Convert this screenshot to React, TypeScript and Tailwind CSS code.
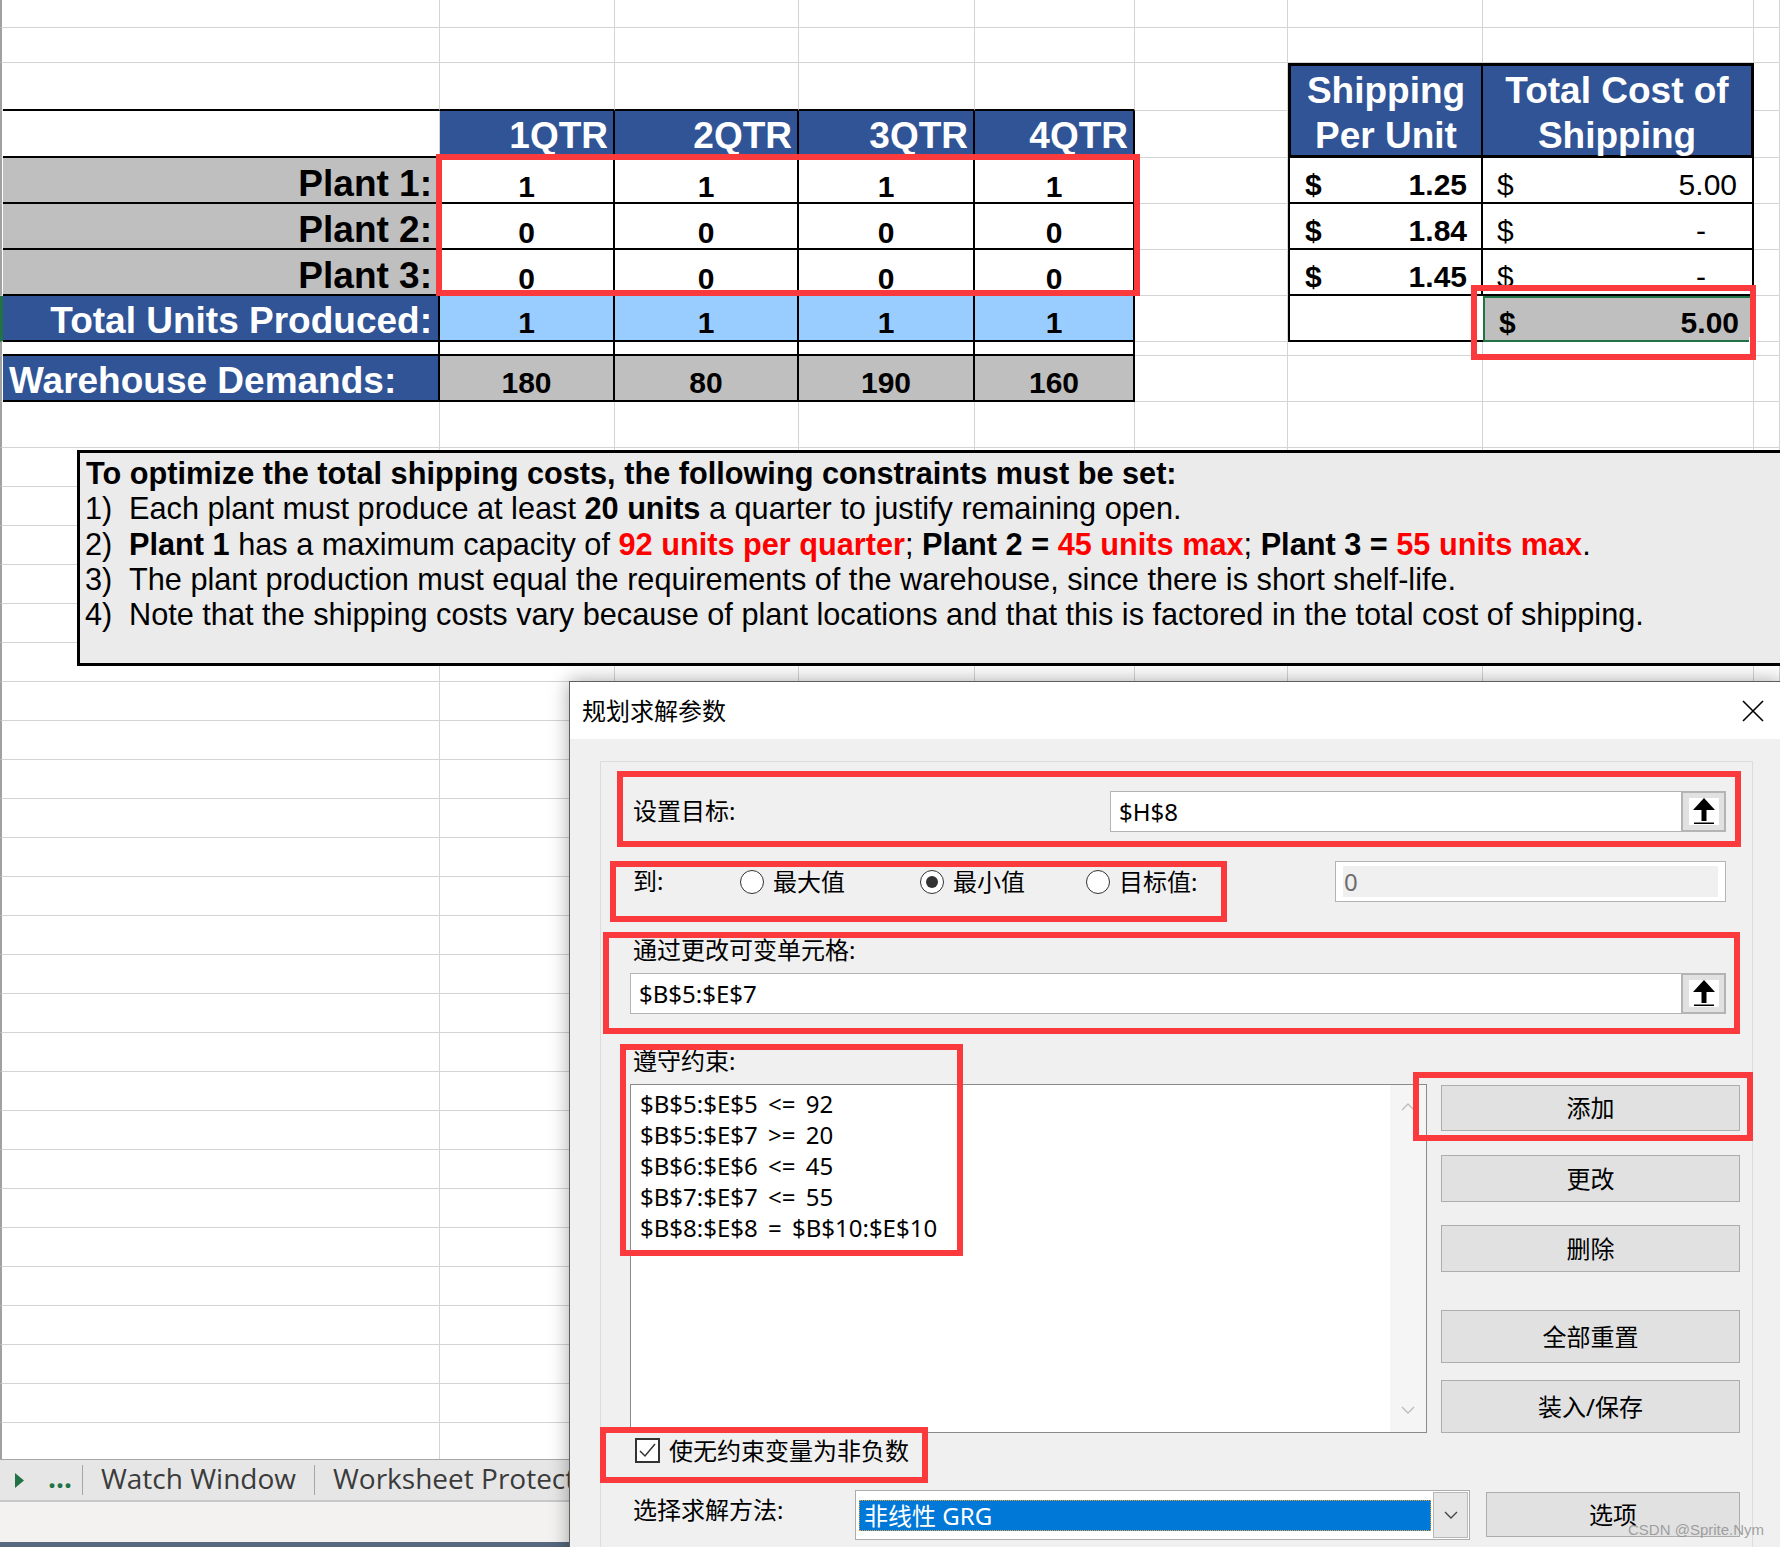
import React from 'react'

type Cell = { cls: string; body?: React.ReactNode }

const GRID = 'border-r border-b border-[#d4d4d4] bg-white'
const LEFT = 'border-l-2 border-l-[#a0a0a0] border-b border-b-[#d4d4d4] bg-white'
const LEFT_SEL = 'border-l-[3px] border-l-[#217346] border-b border-b-[#d4d4d4] bg-white'

const qtrs = ['1QTR', '2QTR', '3QTR', '4QTR']
const plants = [
  ['Plant 1:', [1, 1, 1, 1]],
  ['Plant 2:', [0, 0, 0, 0]],
  ['Plant 3:', [0, 0, 0, 0]],
] as const
const perUnit = ['1.25', '1.84', '1.45']
const totals = ['5.00', '-', '-']
const demands = [180, 80, 190, 160]

const special: Record<string, Cell> = {}

// row 3: top edge of the quarter table + shipping header
for (let c = 1; c <= 5; c++) {
  special[`3-${c}`] = { cls: 'border-r border-r-[#d4d4d4] border-b-2 border-b-black bg-white' }
}
special['3-7'] = {
  cls: 'row-span-2 bg-[#305496] border-t-[3px] border-l-[3px] border-b-[3px] border-r-2 border-black pt-[2px] text-center text-white font-bold text-[37px] leading-[45px]',
  body: <><div>Shipping</div><div>Per Unit</div></>,
}
special['3-8'] = {
  cls: 'row-span-2 bg-[#305496] border-t-[3px] border-r-[3px] border-b-[3px] border-black pt-[2px] text-center text-white font-bold text-[37px] leading-[45px]',
  body: <><div>Total Cost of</div><div>Shipping</div></>,
}

// row 4: quarter headers
special['4-1'] = { cls: 'border-r border-r-[#d4d4d4] border-b-2 border-b-black bg-white' }
qtrs.forEach((q, i) => {
  special[`4-${i + 2}`] = {
    cls: 'bg-[#305496] border-r-2 border-b-2 border-black flex items-end justify-end pr-[5px] pb-[2px] text-white font-bold text-[37px] leading-none',
    body: q,
  }
})

// rows 5-7: plants
plants.forEach(([label, vals], i) => {
  const r = 5 + i
  special[`${r}-1`] = {
    cls: 'bg-[#bfbfbf] border-r-2 border-b-2 border-black flex items-end justify-end pr-[6px] font-bold text-[37px] leading-none',
    body: label,
  }
  vals.forEach((v, j) => {
    special[`${r}-${j + 2}`] = {
      cls: 'bg-white border-r-2 border-b-2 border-black flex items-end justify-center font-bold text-[30px] leading-none',
      body: v,
    }
  })
  special[`${r}-7`] = {
    cls: 'bg-white border-l-2 border-r-2 border-b-2 border-black flex items-end justify-between pl-[15px] pr-[14px] pb-[2px] font-bold text-[30px] leading-none',
    body: <><span>$</span><span>{perUnit[i]}</span></>,
  }
  special[`${r}-8`] = {
    cls: 'bg-white border-r-2 border-b-2 border-black flex items-end justify-between pl-[14px] pr-[15px] pb-[2px] text-[30px] leading-none',
    body: <><span>$</span><span className={totals[i] === '-' ? 'mr-[31px]' : ''}>{totals[i]}</span></>,
  }
})

// row 8: totals
special['8-1'] = {
  cls: 'bg-[#305496] border-r-2 border-b-2 border-black flex items-end justify-end pr-[6px] pb-[1px] text-white font-bold text-[37px] leading-none',
  body: 'Total Units Produced:',
}
for (let c = 2; c <= 5; c++) {
  special[`8-${c}`] = {
    cls: 'bg-[#99ccff] border-r-2 border-b-2 border-black flex items-end justify-center pb-[2px] font-bold text-[30px] leading-none',
    body: 1,
  }
}
special['8-7'] = { cls: 'bg-white border-l-2 border-b-2 border-black' }
special['8-8'] = {
  cls: 'relative bg-[#bfbfbf] border-2 border-[#217346] flex items-end justify-between pl-[14px] pr-[13px] pb-[2px] font-bold text-[30px] leading-none',
  body: (
    <>
      <span>$</span>
      <span>5.00</span>
      <div className="absolute -right-[5px] -bottom-[5px] w-[8px] h-[8px] bg-[#217346] border border-white" />
    </>
  ),
}

// row 9: spacer row
for (let c = 1; c <= 5; c++) {
  special[`9-${c}`] = { cls: 'bg-white border-r-2 border-b-2 border-black' }
}

// row 10: demands
special['10-1'] = {
  cls: 'bg-[#305496] border-r-2 border-b-2 border-black flex items-end pl-[6px] pb-[1px] text-white font-bold text-[37px] leading-none',
  body: 'Warehouse Demands:',
}
demands.forEach((d, i) => {
  special[`10-${i + 2}`] = {
    cls: 'bg-[#bfbfbf] border-r-2 border-b-2 border-black flex items-end justify-center pb-[2px] font-bold text-[30px] leading-none',
    body: d,
  }
})

const Sheet = () => {
  const cells: React.ReactNode[] = []
  for (let r = 1; r <= 37; r++) {
    for (let c = 0; c <= 9; c++) {
      if (r === 4 && (c === 7 || c === 8)) continue
      const key = `${r}-${c}`
      const s = special[key]
      const cls = s ? s.cls : c === 0 ? (r === 8 ? LEFT_SEL : LEFT) : GRID
      cells.push(<div key={key} className={cls}>{s?.body}</div>)
    }
  }
  return (
    <div className="h-[1459px] overflow-hidden">
      <div className="grid grid-cols-[3px_437px_175px_184px_176px_160px_153px_195px_271px_1fr] grid-rows-[28px_35px_48px_47px_46px_46px_46px_46px_14px_46px_46px_repeat(26,39px)]">
        {cells}
      </div>
    </div>
  )
}

const Red = ({ cls }: { cls: string }) => (
  <div className={`absolute border-[6px] border-[#fa3a3c] pointer-events-none ${cls}`} />
)

const UpArrow = () => (
  <div className="w-[30px] h-[27px] bg-white">
    <svg width="30" height="27" viewBox="0 0 30 27">
      <polygon points="15,0 4,12 26,12" fill="#000" />
      <rect x="12.5" y="10" width="5" height="13" fill="#000" />
      <rect x="5" y="24.5" width="20" height="1.5" fill="#000" />
    </svg>
  </div>
)

const RefInput = ({ value, cls }: { value: string; cls: string }) => (
  <div className={`flex h-[41px] border border-[#b4b4b4] bg-white ${cls}`}>
    <div className="flex-1 flex items-center pl-[8px]">{value}</div>
    <div className="w-[45px] -my-px -mr-px border-2 border-[#b4b4b4] bg-[#e1e1e1] flex items-center justify-center">
      <UpArrow />
    </div>
  </div>
)

const Radio = ({ label, checked, cls }: { label: string; checked?: boolean; cls?: string }) => (
  <div className={`flex items-center gap-[9px] ${cls ?? ''}`}>
    <div className="w-[24px] h-[24px] rounded-full border-[1.5px] border-[#333] bg-white flex items-center justify-center">
      {checked && <div className="w-[12px] h-[12px] rounded-full bg-[#333]" />}
    </div>
    <span>{label}</span>
  </div>
)

const Btn = ({ label, cls }: { label: string; cls: string }) => (
  <div className={`flex items-center justify-center bg-[#e1e1e1] border border-[#adadad] ${cls}`}>{label}</div>
)

const Chevron = ({ up, color }: { up?: boolean; color: string }) => (
  <svg width="14" height="8" viewBox="0 0 14 8">
    <path d={up ? 'M1 7L7 1L13 7' : 'M1 1L7 7L13 1'} stroke={color} strokeWidth="1.4" fill="none" />
  </svg>
)

const constraints = [
  '$B$5:$E$5 <= 92',
  '$B$5:$E$7 >= 20',
  '$B$6:$E$6 <= 45',
  '$B$7:$E$7 <= 55',
  '$B$8:$E$8 = $B$10:$E$10',
]

const SolverDialog = () => (
  <div className="absolute left-[569px] top-[681px] w-[1213px] h-[900px] border border-[#5f5f5f] bg-[#f0f0f0] shadow-[0_0_18px_rgba(0,0,0,0.35)] font-['Noto_Sans','Noto_Sans_CJK_SC',sans-serif] text-[24px] text-black">
    {/* title bar */}
    <div className="h-[57px] bg-white flex items-center justify-between pl-[12px] pr-[17px]">
      <span>规划求解参数</span>
      <svg width="22" height="22" viewBox="0 0 22 22">
        <path d="M1 1L21 21M21 1L1 21" stroke="#000" strokeWidth="1.6" />
      </svg>
    </div>

    <div className="pt-[22px] pl-[30px] pr-[28px]">
      <div className="h-[900px] border border-[#dcdcdc] pl-[29px] pr-[26px] flex flex-col">
        {/* objective */}
        <div className="mt-[29px] h-[41px] flex items-center justify-between">
          <span className="pl-[3px] -mt-[2px]">设置目标:</span>
          <RefInput value="$H$8" cls="w-[616px]" />
        </div>

        {/* to */}
        <div className="mt-[29px] h-[41px] flex items-center">
          <span className="pl-[3px] w-[110px] -mt-[2px]">到:</span>
          <Radio label="最大值" cls="w-[180px]" />
          <Radio label="最小值" checked cls="w-[166px]" />
          <Radio label="目标值:" />
          <div className="ml-auto w-[391px] h-full border border-[#b4b4b4] bg-white px-[7px] py-[4px]">
            <div className="h-full bg-[#f0f0f0] flex items-center pl-[1px] text-[#6d6d6d]">0</div>
          </div>
        </div>

        {/* changing cells */}
        <div className="mt-[32px] h-[32px] leading-[32px] pl-[3px]">通过更改可变单元格:</div>
        <RefInput value="$B$5:$E$7" cls="mt-[7px] w-full" />

        {/* constraints */}
        <div className="mt-[31px] h-[32px] leading-[32px] pl-[3px]">遵守约束:</div>
        <div className="mt-[7px] flex">
          <div className="shrink-0 w-[797px] h-[349px] border border-[#8a8a8a] bg-white flex">
            <div className="flex-1 pl-[9px] pt-[3px] leading-[31px] [word-spacing:4px]">
              {constraints.map((c) => (
                <div key={c}>{c}</div>
              ))}
            </div>
            <div className="w-[36px] bg-[#f5f5f5] flex flex-col items-center justify-between py-[18px]">
              <Chevron up color="#bdbdbd" />
              <Chevron color="#bdbdbd" />
            </div>
          </div>
          <div className="shrink-0 ml-[14px] w-[299px] flex flex-col pt-[1px]">
            <Btn label="添加" cls="h-[46px]" />
            <Btn label="更改" cls="mt-[24px] h-[47px]" />
            <Btn label="删除" cls="mt-[23px] h-[47px]" />
            <Btn label="全部重置" cls="mt-[38px] h-[53px]" />
            <Btn label="装入/保存" cls="mt-[17px] h-[53px]" />
          </div>
        </div>

        {/* non-negative */}
        <div className="mt-[5px] h-[25px] flex items-center gap-[9px] pl-[5px]">
          <div className="w-[25px] h-[25px] border-2 border-[#333] bg-white">
            <svg width="21" height="21" viewBox="0 0 21 21">
              <path d="M3 11L8 16L18 4" stroke="#333" strokeWidth="1.5" fill="none" />
            </svg>
          </div>
          <span>使无约束变量为非负数</span>
        </div>

        {/* method */}
        <div className="mt-[27px] flex items-start">
          <span className="shrink-0 w-[225px] pl-[3px] h-[50px] flex items-center pb-[10px]">选择求解方法:</span>
          <div className="shrink-0 w-[615px] h-[50px] border border-[#acacac] bg-white flex">
            <div className="flex-1 pl-[3px] pr-[2px] pt-[9px] pb-[8px]">
              <div className="h-full bg-[#0078d7] border border-dotted border-[#e8a23a] flex items-center pl-[4px] text-white">
                非线性 GRG
              </div>
            </div>
            <div className="w-[35px] my-[1px] mr-[1px] bg-[#e6e6e6] border border-[#b8b8b8] flex items-center justify-center">
              <Chevron color="#444" />
            </div>
          </div>
          <Btn label="选项" cls="shrink-0 ml-[16px] mt-[2px] w-[254px] h-[45px]" />
        </div>
      </div>
    </div>
  </div>
)

const NoteBox = () => (
  <div className="absolute left-[77px] top-[450px] w-[1740px] h-[216px] border-[3px] border-black bg-[#ebebeb] pl-[5px] pt-[3px] text-[30.7px] leading-[35.3px] text-black">
    <div className="font-bold pl-[1px]">To optimize the total shipping costs, the following constraints must be set:</div>
    <div className="flex">
      <span className="w-[44px] shrink-0">1)</span>
      <span>Each plant must produce at least <b>20 units</b> a quarter to justify remaining open.</span>
    </div>
    <div className="flex">
      <span className="w-[44px] shrink-0">2)</span>
      <span>
        <b>Plant 1</b> has a maximum capacity of <b className="text-[#ff0000]">92 units per quarter</b>; <b>Plant 2 =</b>{' '}
        <b className="text-[#ff0000]">45 units max</b>; <b>Plant 3 =</b> <b className="text-[#ff0000]">55 units max</b>.
      </span>
    </div>
    <div className="flex">
      <span className="w-[44px] shrink-0">3)</span>
      <span>The plant production must equal the requirements of the warehouse, since there is short shelf-life.</span>
    </div>
    <div className="flex">
      <span className="w-[44px] shrink-0">4)</span>
      <span>Note that the shipping costs vary because of plant locations and that this is factored in the total cost of shipping.</span>
    </div>
  </div>
)

const TabBar = () => (
  <div className="h-[41px] bg-[#e6e6e6] border-t border-[#a6a6a6] flex items-center font-['Open_Sans',sans-serif] text-[28px] text-[#3b3b3b]">
    <svg className="ml-[15px]" width="9" height="15" viewBox="0 0 9 15">
      <polygon points="0,0 9,7.5 0,15" fill="#217346" />
    </svg>
    <span className="ml-[24px] -mt-[6px] font-bold text-[#217346] leading-none">...</span>
    <div className="ml-[10px] w-px h-[30px] bg-[#a6a6a6]" />
    <span className="ml-[18px] -mt-[5px] leading-none">Watch Window</span>
    <div className="ml-[18px] w-px h-[30px] bg-[#a6a6a6]" />
    <span className="ml-[18px] -mt-[5px] leading-none whitespace-nowrap">Worksheet Protection</span>
  </div>
)

export default function App() {
  return (
    <div className="relative w-[1780px] h-[1547px] overflow-hidden bg-white font-['Liberation_Sans',Arial,sans-serif] text-black">
      <Sheet />
      <TabBar />
      <div className="h-[42px] bg-[#f3f2f1] border-t-2 border-[#c8c8c8]" />
      <div className="h-[5px] bg-[#56687d]" />

      <NoteBox />

      {/* annotations on the sheet */}
      <Red cls="left-[436px] top-[154px] w-[704px] h-[142px]" />
      <Red cls="left-[1471px] top-[285px] w-[285px] h-[75px]" />

      <SolverDialog />

      {/* annotations on the dialog */}
      <Red cls="left-[617px] top-[771px] w-[1124px] h-[76px]" />
      <Red cls="left-[610px] top-[861px] w-[617px] h-[61px]" />
      <Red cls="left-[603px] top-[932px] w-[1137px] h-[102px]" />
      <Red cls="left-[620px] top-[1044px] w-[343px] h-[212px]" />
      <Red cls="left-[1413px] top-[1072px] w-[340px] h-[69px]" />
      <Red cls="left-[600px] top-[1427px] w-[328px] h-[56px]" />

      <div className="absolute left-[1628px] top-[1522px] whitespace-nowrap text-[15px] leading-none text-[rgba(140,140,140,0.8)] font-['Liberation_Sans',sans-serif]">
        CSDN @Sprite.Nym
      </div>
    </div>
  )
}
